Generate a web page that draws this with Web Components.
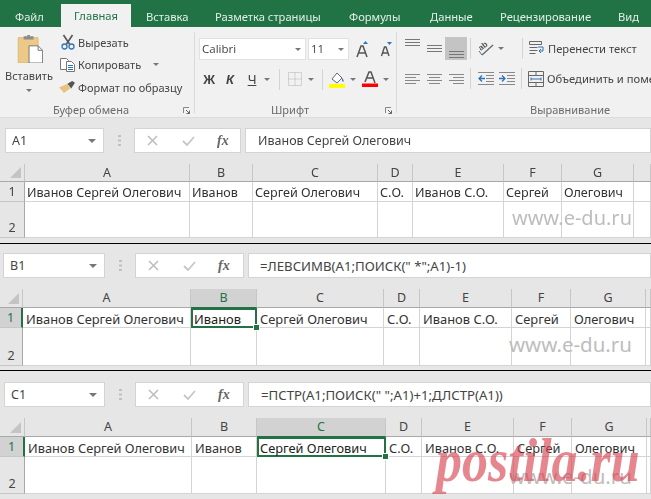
<!DOCTYPE html>
<html lang="ru">
<head>
<meta charset="utf-8">
<style>
  html, body { margin: 0; padding: 0; background: #e6e6e6; }
  body { width: 651px; height: 499px; overflow: hidden; position: relative; font-family: "Noto Sans", sans-serif; }
</style>
</head>
<body>
<xl-ribbon></xl-ribbon>
<xl-panel soft top-gap="10" bottom-gap="5" box-left="5" name="A1"
  text-left="12" name-w="99" fx-w="107" head-h="18" row1-h="20" row2-h="36" bar-h="25" bar-gap="11"
  cols="25 165 63 125 35 91 58 72" cells-size="12.6" formula-size="12.5"
  mark-size="20" mark-right="19" mark-top="76">Иванов Сергей Олегович</xl-panel>
<xl-panel line top-gap="9" bottom-gap="4" box-left="3" name="B1"
  text-left="11" name-w="102" fx-w="109" head-h="19" row1-h="20" row2-h="38" bar-h="25" bar-gap="11"
  cols="23 168 66 127 36 92 59 75" cells-size="12.9" formula-size="13.2"
  selected="2" mark-size="20.500" mark-right="19" mark-top="78">=ЛЕВСИМВ(A1;ПОИСК(" *";A1)-1)</xl-panel>
<xl-panel line top-gap="11" box-left="4" name="C1"
  text-left="12" name-w="101" fx-w="109" head-h="19" row1-h="20" row2-h="37" bar-h="25" bar-gap="11"
  cols="25 167 65 129 36 92 58 75" cells-size="12.8" formula-size="13.2"
  selected="3" mark-size="20.500" mark-right="19" mark-top="81">=ПСТР(A1;ПОИСК(" ";A1)+1;ДЛСТР(A1))</xl-panel>
<xl-stamp></xl-stamp>

<template id="ribbon-tpl">
  <style>
    :host { display: block; height: 117px; background: #f1f1f1; color: #444; font-size: 11px; border-bottom: 1px solid #dcdcdc; overflow: hidden; filter: blur(.35px); }
    svg { display: block; flex: none; }
    .tabs { height: 27px; background: #217346; display: flex; align-items: flex-end; color: #e3efe8; font-size: 11.2px; }
    .tabs span { position: relative; top: -3px; white-space: nowrap; box-sizing: border-box; padding-left: 15px; flex: none; }
    .tabs .on { top: 0; height: 23px; line-height: 23px; background: #f1f1f1; color: #217346; text-align: center; padding: 0; }
    .groups { display: flex; height: 90px; }
    .group { display: grid; grid-template-rows: 1fr 16px; position: relative; box-sizing: border-box; flex: none; }
    .group::after { content: ""; position: absolute; right: 0; top: 5px; bottom: 4px; width: 1px; background: #dadada; }
    .label { text-align: center; font-size: 11px; line-height: 18px; color: #6a6a6a; white-space: nowrap; }
    .launch { position: absolute; right: 5px; bottom: 3px; width: 7px; height: 7px; z-index: 1; }
    .clip { width: 195px; padding-left: 5px; grid-template-columns: 48px 1fr; }
    .clip .label { grid-column: 1 / 3; padding-right: 18px; }
    .paste { display: flex; flex-direction: column; align-items: center; padding-top: 8px; font-size: 11px; line-height: 14px; }
    .small { display: flex; flex-direction: column; padding: 5px 0 0 7px; gap: 2.500px; white-space: nowrap; font-size: 11px; }
    .small div { display: flex; align-items: center; gap: 3px; height: 20px; }
    .ico { width: 15px; display: flex; justify-content: center; flex: none; }
    .font { width: 202px; padding-left: 4px; }
    .font .label { padding-right: 16px; }
    .combo-row { display: flex; gap: 2px; padding-top: 11px; align-items: center; height: 22px; }
    .combo { height: 22px; background: #fff; border: 1px solid #e1e1e1; box-sizing: border-box; font: 11.5px/20px "Open Sans", sans-serif; color: #444; padding-left: 2px; position: relative; }
    .arrow { width: 0; height: 0; border: 3px solid transparent; border-top: 3px solid #777; border-bottom: 0; display: inline-block; flex: none; }
    .combo .arrow { position: absolute; right: 4px; top: 9px; }
    .tools { display: flex; align-items: center; height: 22px; margin-top: 8px; }
    .b { font-weight: 700; font-size: 13px; color: #444; text-align: center; font-family: "Liberation Sans", sans-serif; width: 18px; flex: none; }
    .sep { width: 1px; height: 21px; background: #d4d4d4; flex: none; }
    .align { width: 254px; padding-left: 4px; overflow: hidden; }
    .align::after { display: none; }
    .align .label { text-align: left; padding-left: 129px; }
    .arow { display: flex; align-items: center; height: 23px; }
    .arow + .arow { margin-top: 7px; }
    .cell22 { width: 22px; height: 23px; display: flex; align-items: center; justify-content: center; flex: none; }
    .active { background: #c4c4c4; }
    .wrap { white-space: nowrap; font-size: 11.2px; display: flex; gap: 3px; align-items: center; }
    .aligns { padding-top: 10px; }
    .orient { font: 700 8px "Liberation Sans", sans-serif; fill: #555; }
  </style>
  <div class="tabs">
    <span style="width:61px">Файл</span><span class="on" style="width:70px">Главная</span>
    <span style="width:69px">Вставка</span><span style="width:134px">Разметка страницы</span>
    <span style="width:81px">Формулы</span><span style="width:71px">Данные</span>
    <span style="width:117px;padding-left:14px">Рецензирование</span><span style="width:48px">Вид</span>
  </div>
  <div class="groups">
    <section class="group clip">
      <div class="paste">
        <svg width="27" height="28" viewBox="0 0 29 31">
          <path d="M2 3h22v28H2z" fill="#edc987" stroke="#dcb878"/>
          <path d="M8 1.500h4V0h3v1.500h4V5H8z" fill="#8c8c8c"/>
          <path d="M14 12h10l5 5v14H14z" fill="#fff" stroke="#6e6e6e"/>
          <path d="M24 12v5h5" fill="none" stroke="#6e6e6e"/>
        </svg>
        <span style="margin-top:6px">Вставить</span><i class="arrow" style="margin-top:6px"></i>
      </div>
      <div class="small">
        <div><span class="ico"><svg width="14" height="16" viewBox="0 0 14 16"><path d="M2.500 1l6 9M11.500 1l-6 9" stroke="#555" stroke-width="1.600" fill="none"/><circle cx="3.500" cy="12.500" r="2.500" fill="none" stroke="#2f75b5" stroke-width="1.300"/><circle cx="10.500" cy="12.500" r="2.500" fill="none" stroke="#2f75b5" stroke-width="1.300"/></svg></span>Вырезать</div>
        <div><span class="ico"><svg width="15" height="15" viewBox="0 0 15 15"><path d="M.5 1.500h6l2 2v9h-8z" fill="#fff" stroke="#777"/><path d="M6.500 4.500h5l3 3v7h-8z" fill="#fff" stroke="#777"/><path d="M8 8.500h5M8 10.500h5M8 12.500h5" stroke="#2f75b5"/></svg></span>Копировать<i class="arrow" style="margin-left:9px"></i></div>
        <div><span class="ico"><svg width="17" height="14" viewBox="0 0 18 15"><path d="M0 8l9-4 3 5-7 5c-1-2-3-4-5-6z" fill="#e9c27d"/><path d="M9 4l5-3 3 2-4 6z" fill="#555"/></svg></span>Формат по образцу</div>
      </div>
      <div class="label">Буфер обмена</div>
      <svg class="launch" viewBox="0 0 7 7"><path d="M.5 6V.5H6" fill="none" stroke="#888"/><path d="M3 3l3.500 3.500M6.500 3.500v3h-3" fill="none" stroke="#666"/></svg>
    </section>
    <section class="group font">
      <div>
        <div class="combo-row">
          <div class="combo" style="width:107px">Calibri<i class="arrow"></i></div>
          <div class="combo" style="width:41px">11<i class="arrow"></i></div>
          <svg style="margin-left:5px" width="12" height="17" viewBox="0 0 12 17"><path d="M1 16L5 5h2l4 11M3 12h6" stroke="#555" stroke-width="1.500" fill="none"/><path d="M7 3l2.500-3L12 3z" fill="#2f75b5"/></svg>
          <svg style="margin-left:10px" width="12" height="15" viewBox="0 0 12 15"><path d="M1.500 14L4.500 5h1.500l3 9M3 11h5" stroke="#555" stroke-width="1.400" fill="none"/><path d="M7 0h5L9.500 3z" fill="#2f75b5"/></svg>
        </div>
        <div class="tools">
          <span class="b" style="margin-left:1px">Ж</span>
          <span class="b" style="margin-left:3px;font-style:italic">К</span>
          <span class="b" style="margin-left:4px;font-weight:400;text-decoration:underline">Ч</span>
          <i class="arrow" style="margin:0 9px 0 3px"></i><span class="sep"></span>
          <svg style="margin-left:8px" width="14" height="14" viewBox="0 0 14 14"><path d="M.5.500h13v13H.5zM7 .5v13M.5 7h13" fill="none" stroke="#b3b3b3" stroke-dasharray="1 1"/></svg>
          <i class="arrow" style="margin:0 8px 0 6px"></i><span class="sep"></span>
          <svg style="margin-left:6px" width="16" height="17" viewBox="0 0 16 17"><path d="M3 8l5-6 5 5-5 5z" fill="#fff" stroke="#666"/><path d="M13 7c2 2 2 3 1 4-1-1-1-2-1-4z" fill="#2f75b5"/><path d="M0 13h16v4H0z" fill="#ffff00"/></svg>
          <i class="arrow" style="margin:0 6px 0 5px"></i>
          <svg width="16" height="16" viewBox="0 0 16 16"><path d="M3 11L7 1h2l4 11M5 7h6" stroke="#555" stroke-width="1.500" fill="none"/><path d="M0 12.500h16V16H0z" fill="#ff0000"/></svg>
          <i class="arrow" style="margin-left:5px"></i>
        </div>
      </div>
      <div class="label">Шрифт</div>
      <svg class="launch" viewBox="0 0 7 7"><path d="M.5 6V.5H6" fill="none" stroke="#888"/><path d="M3 3l3.500 3.500M6.500 3.500v3h-3" fill="none" stroke="#666"/></svg>
    </section>
    <section class="group align">
      <div class="aligns">
        <div class="arow">
          <div class="cell22"><svg width="15" height="7" viewBox="0 0 15 7" style="margin-bottom:12px"><path d="M0 .5h15M0 3.500h15M0 6.500h15" stroke="#777"/></svg></div>
          <div class="cell22"><svg width="15" height="7" viewBox="0 0 15 7"><path d="M0 .5h15M0 3.500h15M0 6.500h15" stroke="#777"/></svg></div>
          <div class="cell22 active"><svg width="15" height="7" viewBox="0 0 15 7" style="margin-top:12px"><path d="M0 .5h15M0 3.500h15M0 6.500h15" stroke="#777"/></svg></div>
          <span class="sep" style="margin-left:3px"></span>
          <svg style="margin-left:7px" width="16" height="17" viewBox="0 0 16 17"><text class="orient" transform="translate(3 11) rotate(-40)">ab</text><path d="M4 15L15 5" stroke="#666" stroke-width="1.300" fill="none"/><path d="M1 11l3 4" stroke="#2f75b5"/></svg>
          <i class="arrow" style="margin:0 18px 0 4px"></i><span class="sep"></span>
          <div class="wrap" style="margin-left:6px"><svg width="16" height="16" viewBox="0 0 16 16"><path d="M.5.500h12v3H.5zM.5 6.500h8M.5 9.500h8M.5 12.500h6" fill="none" stroke="#666"/><path d="M9 6h5v4h-4m2-2l-2 2 2 2" fill="none" stroke="#2f75b5"/></svg>Перенести текст</div>
        </div>
        <div class="arow">
          <div class="cell22"><svg width="15" height="10" viewBox="0 0 15 10"><path d="M0 .5h15M0 3.500h11M0 6.500h15M0 9.500h11" stroke="#888"/></svg></div>
          <div class="cell22"><svg width="15" height="10" viewBox="0 0 15 10"><path d="M0 .5h15M2 3.500h11M0 6.500h15M2 9.500h11" stroke="#888"/></svg></div>
          <div class="cell22"><svg width="15" height="10" viewBox="0 0 15 10"><path d="M0 .5h15M4 3.500h11M0 6.500h15M4 9.500h11" stroke="#888"/></svg></div>
          <span class="sep" style="margin-left:3px"></span>
          <svg style="margin-left:7px" width="16" height="13" viewBox="0 0 16 13"><path d="M0 .5h16M8 3.500h8M8 6.500h8M8 9.500h8M0 12.500h16" stroke="#888"/><path d="M7 6.500H1m3-3l-3 3 3 3" fill="none" stroke="#2f75b5" stroke-width="1.300"/></svg>
          <svg style="margin-left:5px" width="16" height="13" viewBox="0 0 16 13"><path d="M0 .5h16M8 3.500h8M8 6.500h8M8 9.500h8M0 12.500h16" stroke="#888"/><path d="M0 6.500h6m-3-3l3 3-3 3" fill="none" stroke="#2f75b5" stroke-width="1.300"/></svg>
          <span class="sep" style="margin-left:6px"></span>
          <div class="wrap" style="margin-left:6px"><svg width="16" height="16" viewBox="0 0 16 16"><path d="M.5.500h15v15H.5zM.5 4.500h15M.5 11.500h15M8 .5v4M8 11.500v4" fill="none" stroke="#666"/><path d="M3 8h10M3 6.500v3M13 6.500v3" stroke="#2f75b5" fill="none"/></svg>Объединить и поме</div>
        </div>
      </div>
      <div class="label">Выравнивание</div>
    </section>
  </div>
</template>

<template id="panel-tpl">
  <style>
    :host { display: block; background: #e6e6e6; position: relative; overflow: hidden; color: #444; }
    :host([line]) { border-top: 1px solid #000; }
    :host([soft]) .bar, :host([soft]) .grid, :host([soft]) .mark { filter: blur(.3px); }
    :host([soft]) .cell { padding-left: 2px; }
    svg { display: block; }
    .bar { display: flex; align-items: stretch; }
    .box { background: #fff; border: 1px solid #d4d4d4; box-sizing: border-box; font-size: 12.5px; display: flex; align-items: center; position: relative; white-space: nowrap; }
    .name { padding-left: 6px; }
    .name i { position: absolute; right: 7px; top: 10px; width: 0; height: 0; border: 4px solid transparent; border-bottom: 0; border-top: 4px solid #777; }
    .dots { width: 30px; flex: none; display: flex; justify-content: center; align-items: center; }
    .fx { display: flex; align-items: center; padding-left: 12px; color: #bbb; flex: none; }
    .fx svg + svg { margin-left: 24px; }
    .fx em { font: italic 700 14px "Liberation Serif", serif; color: #666; margin-left: 22px; }
    .formula { flex: 1; margin-left: 4px; }
    .grid { display: grid; }
    .cell { background: #fff; border-right: 1px solid #d4d4d4; border-bottom: 1px solid #d4d4d4; box-sizing: border-box; font-size: var(--cell-size, 13px); color: #333; white-space: nowrap; padding-left: 3px; line-height: 22px; position: relative; }
    .head { background: #e6e6e6; border-right: 1px solid #c6c6c6; border-bottom: 1px solid #a8a8a8; box-sizing: border-box; text-align: center; font: 12.5px/18px "Noto Sans", sans-serif; color: #444; }
    .rowh { display: flex; align-items: flex-end; justify-content: center; background: #e6e6e6; border-right: 1px solid #a8a8a8; border-bottom: 1px solid #c6c6c6; box-sizing: border-box; font-size: 12.5px; line-height: 18px; color: #444; }
    .corner { position: relative; }
    .corner::after { content: ""; position: absolute; right: 3px; bottom: 3px; border-style: solid; border-width: 0 0 11px 11px; border-color: transparent transparent #c4c4c4 transparent; }
    .sel-head { background: #d2d2d2; color: #217346; border-bottom: 1px solid #217346; }
    .sel-row { background: #d2d2d2; color: #217346; border-right: 2px solid #217346; }
    .sel { box-shadow: inset 0 0 0 2px #217346; border: 0; color: #222; z-index: 1; }
    .sel::after { content: ""; position: absolute; right: -3px; bottom: -3px; width: 5px; height: 5px; background: #217346; border: 1px solid #fff; }
    .mark { position: absolute; font-family: "Noto Sans", sans-serif; line-height: 27px; color: #bdbdbd; white-space: nowrap; z-index: 2; }
  </style>
  <div class="bar">
    <div class="box name"><span id="name"></span><i></i></div>
    <div class="dots"><svg width="3" height="11" viewBox="0 0 3 11"><path d="M0 0h3v2H0zM0 4.500h3v2H0zM0 9h3v2H0z" fill="#c0c0c0"/></svg></div>
    <div class="box fx">
      <svg width="11" height="11" viewBox="0 0 11 11"><path d="M1 1l9 9M10 1l-9 9" stroke="#bcbcbc" stroke-width="1.500"/></svg>
      <svg width="13" height="10" viewBox="0 0 13 10"><path d="M1 5l4 4 7-8" fill="none" stroke="#c6c6c6" stroke-width="1.800"/></svg>
      <em>fx</em>
    </div>
    <div class="box formula"><slot></slot></div>
  </div>
  <div class="grid" id="grid"></div>
  <div class="mark">www.e-du.ru</div>
</template>

<template id="stamp-tpl">
  <style>
    :host { display: block; position: absolute; left: 436px; top: 431px; color: rgba(214, 62, 76, .62); font: italic 700 52px/60px "Liberation Serif", serif; white-space: nowrap; z-index: 5; transform: scaleY(1.16); }
  </style>
  postila.ru
</template>

<script>
class XlRibbon extends HTMLElement {
  constructor() {
    super();
    this.attachShadow({ mode: "open" });
    this.shadowRoot.append(document.getElementById("ribbon-tpl").content.cloneNode(true));
  }
}

class XlPanel extends HTMLElement {
  static rowCells = ["Иванов Сергей Олегович", "Иванов", "Сергей Олегович", "С.О.", "Иванов С.О.", "Сергей", "Олегович", ""];
  static letters = ["A", "B", "C", "D", "E", "F", "G", ""];

  constructor() {
    super();
    this.attachShadow({ mode: "open" });
    this.shadowRoot.append(document.getElementById("panel-tpl").content.cloneNode(true));
  }

  connectedCallback() {
    const root = this.shadowRoot;
    const num = (n) => Number(this.getAttribute(n) || 0);
    const cols = this.getAttribute("cols").split(" ").map(Number);
    const selected = num("selected");
    this.style.paddingBottom = num("bottom-gap") + "px";
    this.style.setProperty("--cell-size", num("cells-size") + "px");

    const bar = root.querySelector(".bar");
    bar.style.height = num("bar-h") + "px";
    bar.style.margin = num("top-gap") + "px 0 " + num("bar-gap") + "px " + num("box-left") + "px";
    root.querySelector(".name").style.width = num("name-w") + "px";
    root.querySelector(".fx").style.width = num("fx-w") + "px";
    const formula = root.querySelector(".formula");
    formula.style.paddingLeft = num("text-left") + "px";
    formula.style.fontSize = num("formula-size") + "px";
    root.getElementById("name").textContent = this.getAttribute("name");

    const grid = root.getElementById("grid");
    grid.style.gridTemplateColumns = cols.map((c) => c + "px").join(" ") + " 1fr";
    grid.style.gridTemplateRows = num("head-h") + "px " + num("row1-h") + "px " + num("row2-h") + "px";

    const add = (cls, text) => {
      const d = document.createElement("div");
      d.className = cls;
      d.textContent = text || "";
      grid.append(d);
    };
    add("head corner");
    XlPanel.letters.forEach((l, i) => add(i + 1 === selected ? "head sel-head" : "head", l));
    add(selected ? "rowh sel-row" : "rowh", "1");
    XlPanel.rowCells.forEach((t, i) => add(i + 1 === selected ? "cell sel" : "cell", t));
    add("rowh", "2");
    XlPanel.rowCells.forEach(() => add("cell"));

    const mark = root.querySelector(".mark");
    mark.style.fontSize = num("mark-size") + "px";
    mark.style.right = num("mark-right") + "px";
    mark.style.top = num("mark-top") + num("top-gap") + "px";
  }
}

class XlStamp extends HTMLElement {
  constructor() {
    super();
    this.attachShadow({ mode: "open" });
    this.shadowRoot.append(document.getElementById("stamp-tpl").content.cloneNode(true));
  }
}

customElements.define("xl-ribbon", XlRibbon);
customElements.define("xl-panel", XlPanel);
customElements.define("xl-stamp", XlStamp);
</script>
</body>
</html>
